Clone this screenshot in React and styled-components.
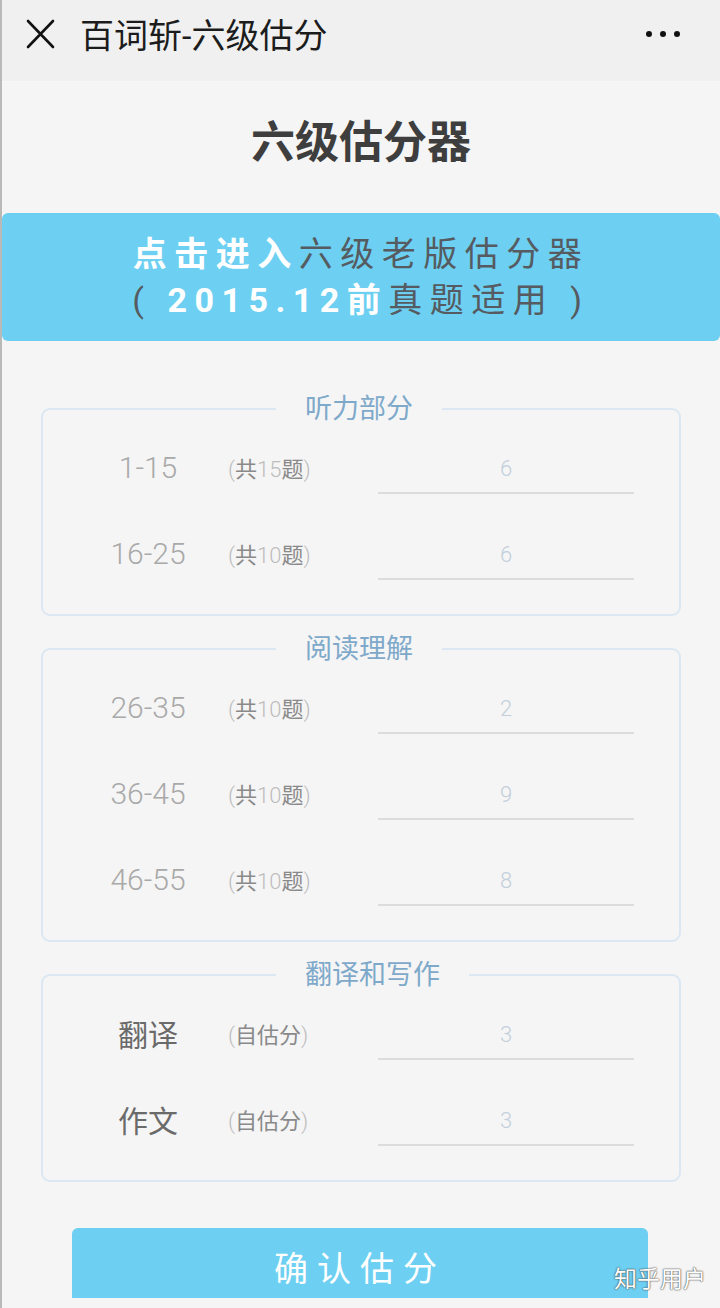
import React from 'react';
import styled, { createGlobalStyle } from 'styled-components';

const GlobalStyle = createGlobalStyle`
  html, body {
    margin: 0;
    padding: 0;
    background: #f5f5f5;
  }
  * {
    box-sizing: border-box;
  }
`;

const CJK = `Roboto, "Noto Sans CJK SC", "Noto Sans", sans-serif`;

const Page = styled.div`
  position: relative;
  width: 720px;
  height: 1308px;
  overflow: hidden;
  background: #f5f5f5;
  border-left: 2px solid #b9b9b9;
  font-family: ${CJK};
`;

const TopBar = styled.header`
  display: flex;
  align-items: center;
  height: 82px;
  padding: 0 40px 14px 22px;
  background: #f0f0f0;
  border-bottom: 1px solid #f8f8f8;
`;

const BarTitle = styled.h2`
  flex: 1;
  margin: 0 0 0 24px;
  font-size: 34px;
  font-weight: 400;
  color: #1c1c1c;
`;

const Dots = styled.div`
  display: flex;
  gap: 8px;
  span {
    width: 6px;
    height: 6px;
    border-radius: 50%;
    background: #111;
  }
`;

const Heading = styled.h1`
  margin: 36px 0 0;
  text-align: center;
  font-size: 44px;
  line-height: 50px;
  font-weight: 700;
  color: #3e3e3e;
`;

const Banner = styled.div`
  margin-top: 45px;
  height: 128px;
  padding: 18px 0;
  background: #6dcff1;
  border-radius: 6px;
  text-align: center;
  font-size: 34px;
  line-height: 46px;
  letter-spacing: 7.5px;
  color: #555b60;
`;

const Light = styled.span`
  color: #fff;
  font-weight: 700;
`;

const Sections = styled.div`
  padding: 0 39px;
  margin-top: 53px;
  display: flex;
  flex-direction: column;
  gap: 18px;
`;

const Group = styled.fieldset`
  margin: 0;
  padding: 0 0 18px;
  border: 2px solid #dbe7f2;
  border-radius: 9px;
`;

const Legend = styled.legend`
  margin-left: 233px;
  padding: 0 29px;
  font-size: 27px;
  line-height: 30px;
  color: #7ea9ca;
`;

const Row = styled.div`
  display: grid;
  grid-template-columns: 76px 108px 256px;
  column-gap: 42px;
  align-items: center;
  height: 86px;
  padding-left: 67px;
`;

const Label = styled.div`
  justify-self: center;
  white-space: nowrap;
  font-size: 30px;
  font-weight: ${(p) => (p.$cjk ? 400 : 300)};
  color: ${(p) => (p.$cjk ? '#6a6a6a' : '#a9a9a9')};
`;

const Note = styled.div`
  white-space: nowrap;
  font-size: 22px;
  color: #8a8a8a;
`;

const Faint = styled.span`
  color: #bdbdbd;
  font-weight: 300;
`;

const ScoreInput = styled.input`
  width: 256px;
  height: 50px;
  margin-top: 4px;
  padding: 0;
  border: none;
  border-bottom: 2px solid #dcdcdc;
  background: transparent;
  text-align: center;
  font-family: ${CJK};
  font-size: 22px;
  font-weight: 300;
  color: #c2cfdb;
  outline: none;
`;

const Submit = styled.button`
  display: block;
  width: 576px;
  height: 70px;
  margin: 46px 0 0 70px;
  padding-top: 8px;
  border: none;
  border-radius: 6px 6px 0 0;
  background: #6dcff1;
  color: #fff;
  font-family: ${CJK};
  font-size: 34px;
  letter-spacing: 9px;
`;

const Watermark = styled.div`
  position: absolute;
  right: 14px;
  bottom: 14px;
  font-size: 23px;
  color: #fff;
  text-shadow: 0 0 2px #555, 0 0 1px #333;
`;

const sections = [
  {
    title: '听力部分',
    rows: [
      { label: '1-15', count: '15', value: '6' },
      { label: '16-25', count: '10', value: '6' },
    ],
  },
  {
    title: '阅读理解',
    rows: [
      { label: '26-35', count: '10', value: '2' },
      { label: '36-45', count: '10', value: '9' },
      { label: '46-55', count: '10', value: '8' },
    ],
  },
  {
    title: '翻译和写作',
    rows: [
      { label: '翻译', self: true, value: '3' },
      { label: '作文', self: true, value: '3' },
    ],
  },
];

function CloseIcon() {
  return (
    <svg width="32" height="32" viewBox="0 0 32 32" fill="none" stroke="#111" strokeWidth="2.6" strokeLinecap="round">
      <path d="M4 3 L29 29 M29 3 L4 29" />
    </svg>
  );
}

export default function App() {
  return (
    <Page>
      <GlobalStyle />
      <TopBar>
        <CloseIcon />
        <BarTitle>百词斩-六级估分</BarTitle>
        <Dots>
          <span />
          <span />
          <span />
        </Dots>
      </TopBar>

      <Heading>六级估分器</Heading>

      <Banner>
        <div>
          <Light>点击进入</Light>六级老版估分器
        </div>
        <div>
          ( <Light>2015.12前</Light>真题适用 )
        </div>
      </Banner>

      <Sections>
        {sections.map((section) => (
          <Group key={section.title}>
            <Legend>{section.title}</Legend>
            {section.rows.map((row) => (
              <Row key={row.label}>
                <Label $cjk={row.self}>{row.label}</Label>
                <Note>
                  {row.self ? (
                    <>
                      <Faint>(</Faint>自估分<Faint>)</Faint>
                    </>
                  ) : (
                    <>
                      <Faint>(</Faint>共<Faint>{row.count}</Faint>题<Faint>)</Faint>
                    </>
                  )}
                </Note>
                <ScoreInput defaultValue={row.value} />
              </Row>
            ))}
          </Group>
        ))}
      </Sections>

      <Submit>确认估分</Submit>
      <Watermark>知乎用户</Watermark>
    </Page>
  );
}
